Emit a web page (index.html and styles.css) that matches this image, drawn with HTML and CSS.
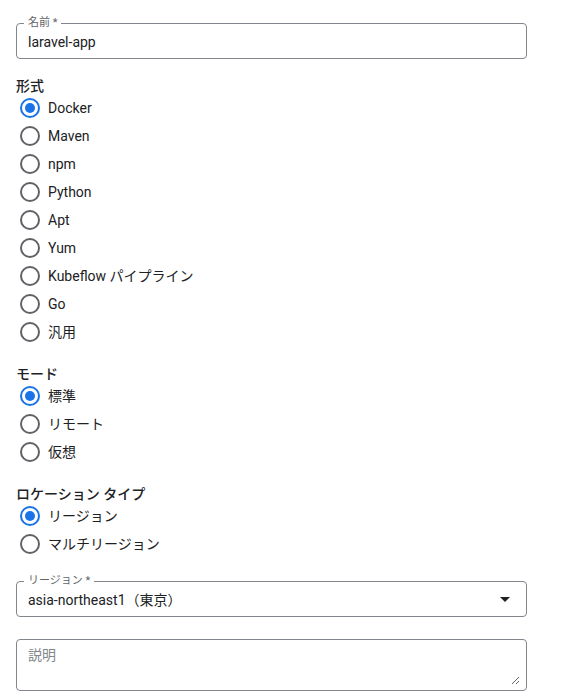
FILE: index.html
```html
<!DOCTYPE html>
<html lang="ja">
<head>
<meta charset="utf-8">
<title>リポジトリの作成</title>
<link rel="stylesheet" href="styles.css">
</head>
<body>
<form class="form">
  <div class="field">
    <span class="field-label">名前 *</span>
    <input class="field-input" type="text" value="laravel-app">
  </div>

  <div class="section section-first">
    <div class="section-title">形式</div>
    <div class="radio-group">
      <label class="radio"><span class="radio-circle checked"></span><span class="radio-text">Docker</span></label>
      <label class="radio"><span class="radio-circle"></span><span class="radio-text">Maven</span></label>
      <label class="radio"><span class="radio-circle"></span><span class="radio-text">npm</span></label>
      <label class="radio"><span class="radio-circle"></span><span class="radio-text">Python</span></label>
      <label class="radio"><span class="radio-circle"></span><span class="radio-text">Apt</span></label>
      <label class="radio"><span class="radio-circle"></span><span class="radio-text">Yum</span></label>
      <label class="radio"><span class="radio-circle"></span><span class="radio-text">Kubeflow パイプライン</span></label>
      <label class="radio"><span class="radio-circle"></span><span class="radio-text">Go</span></label>
      <label class="radio"><span class="radio-circle"></span><span class="radio-text">汎用</span></label>
    </div>
  </div>

  <div class="section">
    <div class="section-title">モード</div>
    <div class="radio-group">
      <label class="radio"><span class="radio-circle checked"></span><span class="radio-text">標準</span></label>
      <label class="radio"><span class="radio-circle"></span><span class="radio-text">リモート</span></label>
      <label class="radio"><span class="radio-circle"></span><span class="radio-text">仮想</span></label>
    </div>
  </div>

  <div class="section">
    <div class="section-title">ロケーション タイプ</div>
    <div class="radio-group">
      <label class="radio"><span class="radio-circle checked"></span><span class="radio-text">リージョン</span></label>
      <label class="radio"><span class="radio-circle"></span><span class="radio-text">マルチリージョン</span></label>
    </div>
  </div>

  <div class="field field-select">
    <span class="field-label">リージョン *</span>
    <span class="select-value">asia-northeast1（東京）</span>
    <svg class="select-arrow" width="10" height="5" viewBox="0 0 10 5"><path d="M0 0 L10 0 L5 5 Z" fill="#202124"/></svg>
  </div>

  <div class="field field-textarea">
    <textarea class="textarea" placeholder="説明"></textarea>
  </div>
</form>
</body>
</html>
```

FILE: styles.css
```css
* {
  box-sizing: border-box;
}

body {
  margin: 0;
  background: #ffffff;
  font-family: Roboto, "Noto Sans CJK JP", "Noto Sans", sans-serif;
  color: #202124;
  font-size: 14px;
}

.form {
  width: 527px;
  padding: 23px 0 0 16px;
}

.field {
  position: relative;
  height: 36px;
  border: 1px solid #80868b;
  border-radius: 4px;
  padding: 7px 11px 7px 11px;
  display: flex;
  align-items: center;
}

.field-label {
  position: absolute;
  top: -8px;
  left: 7px;
  padding: 0 4px;
  background: #ffffff;
  font-size: 11px;
  line-height: 14px;
  color: #5f6368;
}

.field-input {
  border: none;
  outline: none;
  padding: 0;
  margin: 0;
  width: 100%;
  height: 20px;
  font: inherit;
  font-size: 14px;
  line-height: 20px;
  color: #202124;
  background: transparent;
  position: relative;
  top: 1px;
}

.section {
  margin-top: 20px;
}

.section-first {
  margin-top: 17px;
}

.section-title {
  font-size: 14px;
  line-height: 20px;
  font-weight: 500;
  color: #202124;
}

.radio-group {
  display: flex;
  flex-direction: column;
  gap: 4px;
}

.radio {
  display: flex;
  align-items: center;
  height: 24px;
  gap: 8px;
  padding-left: 4px;
}

.radio-circle {
  width: 20px;
  height: 20px;
  border: 2px solid #5f6368;
  border-radius: 50%;
  display: flex;
  align-items: center;
  justify-content: center;
  flex: none;
}

.radio-circle.checked {
  border-color: #1a73e8;
}

.radio-circle.checked::after {
  content: "";
  width: 10px;
  height: 10px;
  border-radius: 50%;
  background: #1a73e8;
}

.radio-text {
  font-size: 14px;
  line-height: 20px;
  color: #202124;
}

.field-select {
  margin-top: 25px;
  justify-content: space-between;
  padding-right: 16px;
}

.select-value {
  font-size: 14px;
  line-height: 20px;
  position: relative;
  top: 1px;
}

.select-arrow {
  display: block;
  flex: none;
}

.field-textarea {
  margin-top: 22px;
  height: 52px;
  padding: 5px 6px 4px 11px;
  align-items: stretch;
}

.textarea {
  display: block;
  width: 100%;
  height: 40px;
  border: none;
  outline: none;
  padding: 0;
  margin: 0;
  font: inherit;
  font-size: 14px;
  line-height: 20px;
  color: #202124;
  background: transparent;
  resize: vertical;
}

.textarea::placeholder {
  color: #80868b;
}
```
